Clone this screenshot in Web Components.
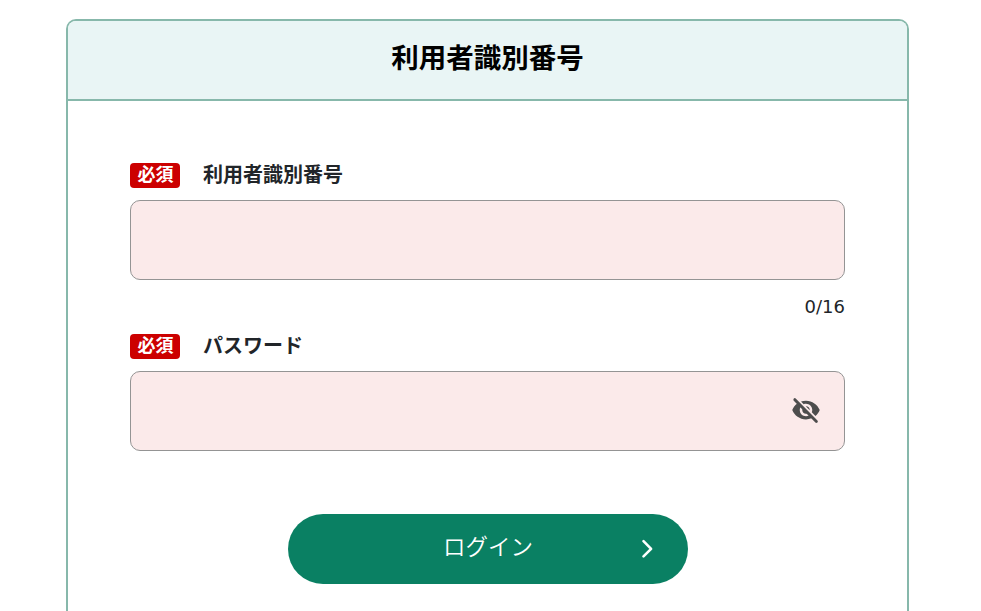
<!DOCTYPE html>
<html lang="ja">
<head>
<meta charset="utf-8">
<title>ログイン</title>
<style>
    body {
        background: #fff;
        color: #212529;
        font-family: 'Noto Sans CJK JP', sans-serif;
        margin: 0;
    }
</style>
</head>
<body>
<login-card>
    <span slot="title">利用者識別番号</span>
    <form-field label="利用者識別番号" maxlength="16"></form-field>
    <form-field label="パスワード" type="password"></form-field>
    <login-button>ログイン</login-button>
</login-card>

<script>
class LoginCard extends HTMLElement {
    constructor () {
        super()
        this.attachShadow({mode: 'open'})
    }

    connectedCallback () {
        this.shadowRoot.innerHTML = this.render()
    }

    style () {
        return `
            <style>
                :host {
                    border: 2px solid #87b8ab;
                    border-bottom: 0;
                    border-radius: 10px 10px 0 0;
                    box-sizing: border-box;
                    display: block;
                    height: 592px;
                    margin: 19px 0 0 66px;
                    overflow: hidden;
                    width: 843px;
                }

                header {
                    background: #e9f5f5;
                    border-bottom: 2px solid #87b8ab;
                    color: #000;
                    font-size: 27.5px;
                    font-weight: bold;
                    height: 78px;
                    line-height: 70px;
                    text-align: center;
                }

                section {
                    display: flex;
                    flex-direction: column;
                    padding: 62px 62px 0;
                }
            </style>
        `
    }

    render () {
        return `
            ${this.style()}
            <header><slot name="title"></slot></header>
            <section><slot></slot></section>
        `
    }
}

class RequiredBadge extends HTMLElement {
    constructor () {
        super()
        this.attachShadow({mode: 'open'})
    }

    connectedCallback () {
        this.shadowRoot.innerHTML = `
            <style>
                :host {
                    background: #c00;
                    border-radius: 4px;
                    color: #fff;
                    display: block;
                    font-size: 18px;
                    font-weight: bold;
                    height: 25px;
                    line-height: 21px;
                    padding-left: 1px;
                    box-sizing: border-box;
                    text-align: center;
                    width: 50px;
                }
            </style>
            <slot></slot>
        `
    }
}

class FormField extends HTMLElement {
    constructor () {
        super()
        this.attachShadow({mode: 'open'})
    }

    connectedCallback () {
        this.shadowRoot.innerHTML = this.render()

        const input = this.shadowRoot.querySelector('input')
        const count = this.shadowRoot.querySelector('.count')
        const toggle = this.shadowRoot.querySelector('button')

        if (count) {
            input.addEventListener('input', () => {
                count.textContent = `${input.value.length}/${input.maxLength}`
            })
        }
        if (toggle) {
            toggle.addEventListener('click', () => {
                input.type = input.type === 'password' ? 'text' : 'password'
            })
        }
    }

    get label () {
        return this.getAttribute('label')
    }

    get max () {
        return this.getAttribute('maxlength')
    }

    get password () {
        return this.getAttribute('type') === 'password'
    }

    style () {
        return `
            <style>
                :host {
                    display: block;
                }

                .head {
                    align-items: center;
                    display: flex;
                    gap: 23px;
                    height: 25px;
                    margin-bottom: 12px;
                }

                label {
                    font-size: 20px;
                    font-weight: bold;
                    line-height: 21px;
                    height: 25px;
                }

                .box {
                    align-items: center;
                    background: #fbeaea;
                    border: 1px solid #949494;
                    border-radius: 10px;
                    box-sizing: border-box;
                    display: flex;
                    height: 80px;
                }

                input {
                    background: none;
                    border: 0;
                    flex: 1;
                    font: inherit;
                    font-size: 20px;
                    height: 100%;
                    min-width: 0;
                    outline: 0;
                    padding: 0 20px;
                }

                button {
                    background: none;
                    border: 0;
                    cursor: pointer;
                    height: 30px;
                    margin: 0 23px 2px 0;
                    padding: 0;
                    width: 30px;
                }

                svg {
                    display: block;
                    fill: #4d4d4d;
                }

                .count {
                    font-family: 'DejaVu Sans', sans-serif;
                    font-size: 18px;
                    height: 54px;
                    line-height: 54px;
                    text-align: right;
                }
            </style>
        `
    }

    // eye with a slash through it
    icon () {
        return `
            <button type="button">
                <svg width="30" height="30" viewBox="0 0 24 24">
                    <path d="M12 7c2.76 0 5 2.24 5 5 0 .65-.13 1.26-.36 1.83l2.92 2.92c1.51-1.26 2.7-2.89 3.43-4.75-1.73-4.39-6-7.5-11-7.5-1.4 0-2.74.25-3.98.7l2.16 2.16C10.74 7.13 11.35 7 12 7zM2 4.27l2.28 2.28.46.46C3.08 8.3 1.78 10.02 1 12c1.73 4.39 6 7.5 11 7.5 1.55 0 3.03-.3 4.38-.84l.42.42L19.73 22 21 20.73 3.27 3 2 4.27zM7.53 9.8l1.55 1.55c-.05.21-.08.43-.08.65 0 1.66 1.34 3 3 3 .22 0 .44-.03.65-.08l1.55 1.55c-.67.33-1.41.53-2.2.53-2.76 0-5-2.24-5-5 0-.79.2-1.53.53-2.2zm4.31-.78l3.15 3.15.02-.16c0-1.66-1.34-3-3-3l-.17.01z"/>
                    <path d="M3 3.6l17.4 17.6" stroke="#4d4d4d" stroke-width="2.1" stroke-linecap="round"/>
                </svg>
            </button>
        `
    }

    render () {
        return `
            ${this.style()}
            <div class="head">
                <required-badge>必須</required-badge>
                <label for="field">${this.label}</label>
            </div>
            <div class="box">
                <input id="field" type="${this.password ? 'password' : 'text'}" ${this.max ? `maxlength="${this.max}"` : ''}>
                ${this.password ? this.icon() : ''}
            </div>
            ${this.max ? `<div class="count">0/${this.max}</div>` : ''}
        `
    }
}

class LoginButton extends HTMLElement {
    constructor () {
        super()
        this.attachShadow({mode: 'open'})
    }

    connectedCallback () {
        this.shadowRoot.innerHTML = this.render()
    }

    style () {
        return `
            <style>
                :host {
                    align-self: center;
                    display: block;
                    margin: 63px 0 0 1px;
                }

                button {
                    align-items: center;
                    background: #0a8063;
                    border: 0;
                    border-radius: 35px;
                    color: #fff;
                    cursor: pointer;
                    display: grid;
                    font-family: inherit;
                    font-size: 22.5px;
                    font-weight: 350;
                    grid-template-columns: 47px 1fr 47px;
                    height: 70px;
                    padding: 0;
                    width: 400px;
                }

                span {
                    grid-column: 2;
                    line-height: 62px;
                    height: 70px;
                }
            </style>
        `
    }

    render () {
        return `
            ${this.style()}
            <button type="button">
                <span><slot></slot></span>
                <svg width="12" height="20" viewBox="0 0 12 20" fill="none" stroke="#fff" stroke-width="2.6" stroke-linecap="round" stroke-linejoin="round">
                    <path d="M2.5 2.2l7.6 7.6-7.6 7.6"/>
                </svg>
            </button>
        `
    }
}

window.customElements.define('login-card', LoginCard)
window.customElements.define('required-badge', RequiredBadge)
window.customElements.define('form-field', FormField)
window.customElements.define('login-button', LoginButton)
</script>
</body>
</html>
